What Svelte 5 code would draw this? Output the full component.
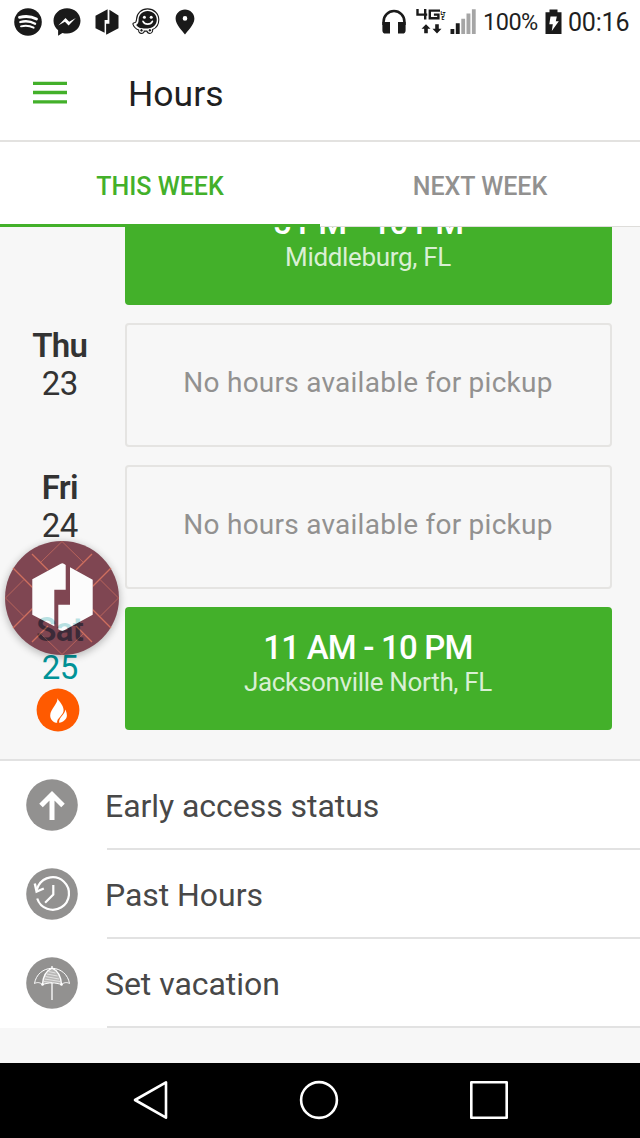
<script lang="ts">
  type Shift = { time?: string; place?: string };
  type Day = Shift & { name?: string; date?: number; today?: boolean; busy?: boolean };

  const tabs = ['THIS WEEK', 'NEXT WEEK'];
  let active = $state(0);

  const days: Day[] = [
    { time: '5 PM - 10 PM', place: 'Middleburg, FL' },
    { name: 'Thu', date: 23 },
    { name: 'Fri', date: 24 },
    { name: 'Sat', date: 25, time: '11 AM - 10 PM', place: 'Jacksonville North, FL', today: true, busy: true }
  ];

  const links = [
    { icon: 'arrow', label: 'Early access status' },
    { icon: 'history', label: 'Past Hours' },
    { icon: 'umbrella', label: 'Set vacation' }
  ];
</script>

<div class="screen">
  <div class="status">
    <div class="status-left">
      <svg width="28" height="28" viewBox="0 0 28 28">
        <circle cx="14" cy="14" r="13.8" fill="#1a1a1a" />
        <g fill="none" stroke="#fff" stroke-linecap="round">
          <path d="M5.500 9.400c5.700-1.500 12-1 17 1.700" stroke-width="2.800" />
          <path d="M6.300 14c5-1.300 10.400-.8 14.800 1.700" stroke-width="2.300" />
          <path d="M7 18.300c4.400-1.100 8.800-.7 12.600 1.400" stroke-width="1.900" />
        </g>
      </svg>
      <svg class="messenger" width="28" height="28" viewBox="0 0 28 28">
        <path d="M14 .3C6.500.3.5 5.800.5 12.800c0 3.900 1.700 7 4.600 9.400v5.500l4.300-2.800c1.400.4 3 .6 4.600.6 7.500 0 13.500-5.600 13.500-12.700S21.500.3 14 .3z" fill="#1a1a1a" />
        <path d="M5.300 17.600l7.200-7.700 3.700 3.800 6.600-3.800-7.200 7.600-3.700-3.700z" fill="#fff" />
      </svg>
      <svg class="hex" width="24" height="26" viewBox="0 0 24 26">
        <path d="M12.600.3v10.700H9.600v12.800L.5 19.200V6.700z" fill="#1a1a1a" />
        <path d="M14.400.8l9.100 5.700v12.800l-11.800 6.300h-.6v-10.800h3.300z" fill="#1a1a1a" />
      </svg>
      <svg class="waze" width="28" height="27" viewBox="0 0 28 27">
        <path d="M15.500.9c6.300 0 11.300 4.700 11.300 10.800 0 4.500-2.500 8.200-6.200 9.900.3 2-1 3.800-2.800 3.800-1.500 0-2.600-1-2.800-2.300h-2.700c-.3 1.400-1.400 2.300-2.800 2.300-1.900 0-3.100-1.600-2.800-3.300C4 21 1.900 19 1 16.400c-.3-.9.300-1.500 1.100-1.600 2-.3 2.300-1.200 2.400-3.400C4.700 5.200 9.400.9 15.500.9z" fill="#fff" stroke="#1a1a1a" stroke-width="1.100" />
        <path d="M15.600 3c5.200 0 9.200 3.800 9.200 8.700 0 5-4 8.700-9.200 8.700H12c-3.400 0-6.200-1-7.900-3.500 2.200-.8 2.500-2.600 2.500-5.300C6.700 6.600 10.600 3 15.600 3z" fill="#1a1a1a" />
        <circle cx="12.400" cy="9.300" r="1.500" fill="#fff" />
        <circle cx="19.200" cy="9.300" r="1.500" fill="#fff" />
        <path d="M11 13.300c1.800 3.700 7.600 3.700 9.400 0" fill="none" stroke="#fff" stroke-width="1.600" stroke-linecap="round" />
        <circle cx="9.500" cy="22.300" r="1.700" fill="#1a1a1a" stroke="#fff" />
        <circle cx="17.900" cy="22.300" r="1.700" fill="#1a1a1a" stroke="#fff" />
      </svg>
      <svg class="pin" width="20" height="26" viewBox="0 0 20 26">
        <path d="M10 .6C4.800.6.6 4.600.6 9.700c0 6.300 7.200 12.200 9.400 15.900 2.200-3.700 9.400-9.600 9.400-15.900C19.400 4.600 15.200.6 10 .6zm0 6.500a2.300 2.300 0 110 4.600 2.300 2.300 0 010-4.600z" fill="#1a1a1a" />
      </svg>
    </div>
    <div class="status-right">
      <svg width="24" height="26" viewBox="0 0 24 26">
        <path d="M1.600 16v-3.500C1.600 6.700 6.300 2 12 2s10.400 4.700 10.400 10.500V16" fill="none" stroke="#1a1a1a" stroke-width="2.600" />
        <path d="M.4 13H8v11.500H3.500A3.100 3.100 0 01.4 21.400zM16 13h7.600v8.400a3.100 3.100 0 01-3.100 3.100H16z" fill="#1a1a1a" />
      </svg>
      <svg class="lte" width="30" height="26" viewBox="0 0 30 26">
        <path d="M1.500 0v5.600h9.700M9.200 0v10.500" fill="none" stroke="#1a1a1a" stroke-width="2.400" />
        <path d="M24 1.600H13.800v7.600h8.600V5.600h-4.500" fill="none" stroke="#1a1a1a" stroke-width="2.400" />
        <text class="lte-text" x="24.600" y="5.600">L</text>
        <text class="lte-text" x="26.600" y="7.400">T</text>
        <text class="lte-text" x="25.600" y="10.800">E</text>
        <path d="M10 15.200l-4.500 4.600h2.700v4.400h3.600v-4.400h2.700zM21 24.400l4.500-4.600h-2.700v-4.600h-3.600v4.600h-2.700z" fill="#1a1a1a" />
      </svg>
      <svg class="signal" width="26" height="26" viewBox="0 0 26 26">
        <path d="M.5 20h3.800v5H.5zM5.800 14.300h3.900V25H5.800z" fill="#1a1a1a" />
        <path d="M11.300 9.700h3.800V25h-3.800zM16.500 4.500h3.900V25h-3.900zM21.900.2h3.800V25h-3.800z" fill="#a5a5a5" />
      </svg>
      <span class="percent">100%</span>
      <svg class="battery" width="17" height="26" viewBox="0 0 17 26">
        <path d="M4.500.5h8v2.800h4V25H.5V3.300h4z" fill="#1a1a1a" />
        <path d="M5.500 7.500h6.300l-1 4.700h3L6.800 22l1-6.800H4.300z" fill="#fff" />
      </svg>
      <span class="clock">00:16</span>
    </div>
  </div>

  <header>
    <button class="menu" aria-label="Menu">
      <svg width="34" height="24" viewBox="0 0 34 24">
        <path d="M0 2.300h34M0 11.500h34M0 20.800h34" stroke="#43b02a" stroke-width="3.300" />
      </svg>
    </button>
    <h1>Hours</h1>
  </header>

  <nav class="tabs">
    {#each tabs as tab, i}
      <button class="tab" class:active={active === i} onclick={() => (active = i)}>{tab}</button>
    {/each}
  </nav>

  <main>
    {#each days as day}
      <section class="day">
        <div class="date" class:today={day.today}>
          {#if day.name}
            <div class="name">{day.name}</div>
            <div class="number">{day.date}</div>
          {/if}
          {#if day.busy}
            <svg class="flame" width="44" height="44" viewBox="0 0 44 44">
              <circle cx="22" cy="22" r="21.400" fill="#ff5a00" />
              <path d="M21.200 10.200c1.500 4.500-7 10.800-7 17.200 0 4.200 3 7 7 7.400-1-4.400 6.800-7.600 6.400-13-.2-4.600-4.400-8.400-6.400-11.600z" fill="#fff" />
              <path d="M29.200 21.500c.2 5-6.500 7.300-6.100 13.200 4.200-.5 7.700-3.300 7.800-7.200 0-2.600-.8-4.300-1.700-6z" fill="#fff" />
            </svg>
          {/if}
        </div>
        {#if day.time}
          <div class="card booked">
            <div class="time">{day.time}</div>
            <div class="place">{day.place}</div>
          </div>
        {:else}
          <div class="card empty">No hours available for pickup</div>
        {/if}
      </section>
    {/each}
  </main>

  <ul class="links">
    {#each links as link}
      <li>
        <svg width="52" height="52" viewBox="0 0 52 52">
          <circle cx="26" cy="26" r="25.800" fill="#929190" />
          {#if link.icon === 'arrow'}
            <path d="M26 41V15M15 26.500L26 15.500l11 11" fill="none" stroke="#fff" stroke-width="5" />
          {:else if link.icon === 'history'}
            <g fill="none" stroke="#fff" stroke-width="2.200">
              <path d="M11.200 30.500A16.300 16.300 0 1012.500 17.500L10.500 22" />
              <path d="M27.300 17v9.500l-8.200 8.300" />
              <path d="M8.800 15.500l1.800 8 7.200-3" stroke-width="2.400" />
            </g>
          {:else}
            <g fill="none" stroke="#fff" stroke-width="1">
              <path d="M8.500 26.500C10 17.500 17 11.600 26 11.200c9 .4 16 6.300 17.500 15.300-2.500-1.400-5.500-1.300-8 1.200-5.400-2.400-13.600-2.400-19 0-2.500-2.500-5.500-2.600-8-1.200z" />
              <path d="M16.500 27.700C17 19.500 20.500 13.500 26 11.200c5.500 2.300 9 8.300 9.500 16.500M26 9v2" stroke-width="1.300" />
              <path d="M26 26v17" stroke-width="1.300" />
            </g>
            <path d="M16.500 27.700C17 19.500 20.500 13.500 26 11.200c5.500 2.300 9 8.300 9.500 16.500-5.400-2.400-13.600-2.400-19 0z" fill="#fff" opacity=".35" />
            <path d="M22.500 14.500l7 1.500M21 17l10.500 2M19.500 19.500l13.500 2.500M18.500 22l15.500 2.500M18 24.500l8 1" fill="none" stroke="#fff" stroke-width=".6" />
            <circle cx="16.500" cy="27.500" r="1.300" fill="#fff" />
            <circle cx="35.500" cy="27.500" r="1.300" fill="#fff" />
          {/if}
        </svg>
        <span>{link.label}</span>
      </li>
    {/each}
  </ul>

  <div class="softkeys">
    <svg width="36" height="40" viewBox="0 0 36 40">
      <path d="M2 20L33 2.300v35.400z" />
    </svg>
    <svg width="40" height="40" viewBox="0 0 40 40">
      <circle cx="20" cy="20" r="17.900" />
    </svg>
    <svg width="40" height="40" viewBox="0 0 40 40">
      <path d="M2.300 2.300h35.400v35.400H2.300z" />
    </svg>
  </div>

  <!-- floating chat head, stays above the list -->
  <svg class="bubble" width="116" height="116" viewBox="0 0 116 116">
    <circle cx="58" cy="58" r="57" fill="#520314" />
    <g fill="none" stroke="#c13c24">
      <path d="M28 14l16 16M9 28l24 24M88 14L72 30M107 28L83 52M28 102l16-16M9 88l24-24M88 102L72 86M107 88L83 64" stroke-width="1.300" />
      <path d="M58 1.500l-21.500 21M58 1.500l21.500 21M1.500 58L20 39.500M1.500 58L20 76.500M114.500 58L96 39.500M114.500 58L96 76.500M58 114.500l-21.500-21M58 114.500l21.500-21" stroke-width=".7" />
    </g>
    <path d="M58.300 23.300l30.400 16.400v35L58.300 91.300l-30-16.600V39.300z" fill="#520314" />
    <path d="M61.700 25v24.700H50.300v36.600l-22-11.600V39.300l28.500-15.600q1.500-.8 3 0z" fill="#fff" />
    <path d="M66 27.300l22.700 12.400v35L59.800 90.500q-1.500.8-3 0l-2.500-1.200V64.700H66z" fill="#fff" />
  </svg>
</div>

<style>
  :global(body) {
    margin: 0;
  }
  .screen {
    position: relative;
    width: 640px;
    height: 1138px;
    display: flex;
    flex-direction: column;
    overflow: hidden;
    background: #f7f7f7;
    color: #1f1f1f;
    font-family: Roboto, "Liberation Sans", sans-serif;
  }
  svg {
    display: block;
    flex: none;
  }
  button {
    padding: 0;
    border: 0;
    background: none;
    font-family: inherit;
  }
  .status {
    height: 44px;
    padding: 0 10px 1px 14px;
    box-sizing: border-box;
    display: flex;
    justify-content: space-between;
    align-items: center;
    background: #fff;
  }
  .status-left, .status-right {
    display: flex;
    align-items: center;
  }
  .messenger {
    margin-left: 11px;
  }
  .hex {
    margin-left: 14px;
  }
  .waze {
    margin-left: 13px;
  }
  .pin {
    margin-left: 15px;
  }
  .lte {
    margin-left: 10px;
  }
  .lte-text {
    font-size: 5px;
    font-weight: 700;
  }
  .signal {
    margin-left: 4px;
  }
  .percent {
    width: 55px;
    margin: 1px 0 0 7px;
    font-size: 23.500px;
    letter-spacing: -0.5px;
  }
  .battery {
    margin-left: 7px;
  }
  .clock {
    width: 62px;
    margin: 1px 0 0 6px;
    font-size: 25px;
    letter-spacing: -0.2px;
    white-space: nowrap;
  }
  header {
    height: 98px;
    flex: none;
    padding-left: 33px;
    display: flex;
    align-items: center;
    background: #fff;
    border-bottom: 2px solid #e3e2e0;
    box-sizing: border-box;
  }
  .menu {
    margin-top: 1px;
  }
  h1 {
    margin: 4px 0 0 61px;
    font-size: 35.500px;
    font-weight: 400;
  }
  .tabs {
    height: 85px;
    display: flex;
    flex: none;
    background: #fff;
  }
  .tab {
    flex: 1;
    padding-top: 4px;
    border-bottom: 1px solid #deddda;
    color: #929190;
    font-size: 25px;
    font-weight: 500;
  }
  .tab.active {
    padding-top: 6px;
    border-bottom: 3px solid #43b02a;
    color: #43b02a;
  }
  main {
    height: 532px;
    flex: none;
    overflow: hidden;
    display: flex;
    flex-direction: column;
    gap: 18px;
  }
  .day {
    height: 124px;
    flex: none;
    display: flex;
  }
  .day:first-child {
    margin-top: -46px;
  }
  .date {
    width: 119.500px;
    margin-right: 5px;
    color: #333;
    font-size: 33px;
    line-height: 38px;
    text-align: center;
  }
  .date.today {
    color: #009397;
  }
  .name {
    padding-top: 4px;
    font-weight: 600;
    letter-spacing: -0.7px;
  }
  .number {
    letter-spacing: -0.5px;
  }
  .flame {
    margin: 1px 0 0 36px;
  }
  .card {
    width: 487px;
    height: 124px;
    box-sizing: border-box;
    border-radius: 4px;
    text-align: center;
  }
  .booked {
    height: 123px;
    padding-top: 21px;
    background: #43b02a;
    color: #fff;
  }
  .day:first-child .booked {
    height: 124px;
    padding-top: 22px;
  }
  .time {
    font-size: 33px;
    font-weight: 500;
    line-height: 40px;
    letter-spacing: -0.8px;
  }
  .place {
    margin-top: -1px;
    font-size: 26px;
    line-height: 30px;
    letter-spacing: -0.33px;
    color: #d9efd4;
  }
  .empty {
    border: 2px solid #e5e4e2;
    color: #929190;
    font-size: 28px;
    line-height: 115px;
    letter-spacing: 0.25px;
  }
  .links {
    margin: 0;
    padding: 0;
    list-style: none;
    background: #fff;
    border-top: 2px solid #e2e2e2;
  }
  li {
    height: 89px;
    padding-left: 26px;
    display: flex;
    align-items: center;
    gap: 28.500px;
  }
  li svg {
    margin-bottom: 2px;
  }
  li span {
    flex: 1;
    height: 87px;
    border-bottom: 2px solid #e2e2e2;
    color: #484848;
    font-size: 32px;
    line-height: 90px;
    letter-spacing: -0.05px;
    text-indent: -1.500px;
  }
  .softkeys {
    height: 75px;
    margin-top: auto;
    padding: 0 0 1px 2px;
    box-sizing: border-box;
    display: flex;
    justify-content: center;
    align-items: center;
    gap: 130px;
    background: #000;
  }
  .softkeys svg {
    fill: none;
    stroke: #fff;
    stroke-width: 2.600;
    stroke-linejoin: round;
  }
  .bubble {
    position: absolute;
    left: 4px;
    top: 540px;
    opacity: 0.72;
    filter: drop-shadow(0 2px 4px rgba(0, 0, 0, 0.4));
  }
</style>
